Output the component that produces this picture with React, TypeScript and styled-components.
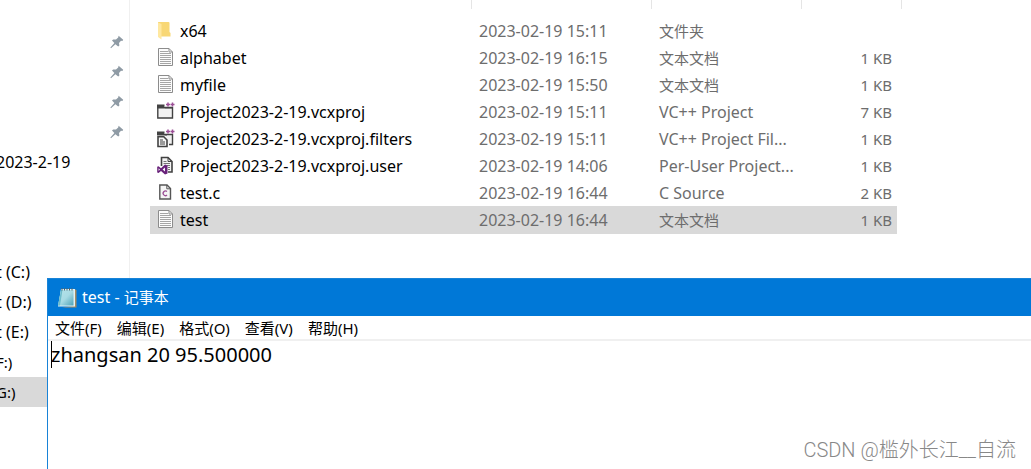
import React from "react";
import styled, { createGlobalStyle } from "styled-components";

const GlobalStyle = createGlobalStyle`
  * { box-sizing: border-box; }
  body {
    margin: 0;
    background: #fff;
    color: #000;
    font-family: "Noto Sans", "Noto Sans CJK SC", sans-serif;
    font-size: 15px;
  }
`;

const Desktop = styled.main`
  position: relative;
  display: flex;
  min-height: 100vh;
  overflow: hidden;
`;

const Sidebar = styled.nav`
  width: 130px;
  flex: none;
  padding-top: 27px;
  border-right: 1px solid #f0f0f0;
  overflow: hidden;
`;

const SideGroup = styled.div`
  margin-bottom: 80px;
`;

const SideItem = styled.a<{ $selected?: boolean }>`
  display: flex;
  align-items: center;
  height: 30px;
  padding-right: 5px;
  color: #000;
  line-height: 30px;
  text-decoration: none;
  white-space: pre;
  background: ${(p) => (p.$selected ? "#d9d9d9" : "transparent")};

  svg { margin-left: auto; }
`;

const SideLabel = styled.span<{ $large?: boolean }>`
  margin-left: -4px;
  font-size: ${(p) => (p.$large ? 16 : 15)}px;
`;

const Explorer = styled.section`
  flex: 1;
  min-width: 0;
  padding-left: 20px;
`;

const FileTable = styled.table`
  width: 752px;
  table-layout: fixed;
  border-collapse: collapse;
`;

const HeadCell = styled.th<{ $width: number; $plain?: boolean }>`
  width: ${(p) => p.$width}px;
  height: 17px;
  padding: 0;
  background: ${(p) =>
    p.$plain ? "none" : "linear-gradient(#e5e5e5, #e5e5e5) right top / 1px 9px no-repeat"};
`;

const FileRow = styled.tr<{ $selected?: boolean }>`
  height: ${(p) => (p.$selected ? 28 : 27)}px;
  td { background: ${(p) => (p.$selected ? "#d9d9d9" : "transparent")}; }
  td:last-child { background: none; }
`;

const Cell = styled.td<{ $right?: boolean; $small?: boolean }>`
  padding: 0 5px 0 7px;
  color: #6d6d6d;
  font-size: ${(p) => (p.$small ? 15 : 16)}px;
  line-height: 26px;
  white-space: nowrap;
  text-align: ${(p) => (p.$right ? "right" : "left")};
`;

const NameCell = styled(Cell)`
  color: #000;
`;

const NameBox = styled.div`
  display: flex;
  align-items: center;
  gap: 6px;
`;

const NotepadWindow = styled.section`
  position: absolute;
  left: 47px;
  top: 278px;
  right: 0;
  bottom: 0;
  display: flex;
  flex-direction: column;
  background: #fff;
  border-left: 1px solid #1883d7;
`;

const TitleBar = styled.header`
  display: flex;
  align-items: center;
  gap: 4px;
  height: 38px;
  padding-left: 9px;
  color: #fff;
  background: #0078d7;
  border-top: 1px solid #1883d7;
`;

const Title = styled.h1`
  margin: 0;
  font-size: 15px;
  font-weight: 400;
  line-height: 36px;
  padding-bottom: 2px;
`;

const FileName = styled.span`
  font-size: 16px;
`;

const MenuBar = styled.div`
  display: flex;
  gap: 15px;
  height: 25px;
  padding-left: 7px;
  border-bottom: 2px solid #f0f0f0;
`;

const MenuButton = styled.button`
  padding: 0;
  border: 0;
  background: none;
  color: #000;
  font: inherit;
  line-height: 24px;
`;

const EditorArea = styled.div`
  position: relative;
  display: flex;
  flex: 1;
`;

const Editor = styled.textarea`
  flex: 1;
  width: 100%;
  padding: 0 3px;
  border: 0;
  outline: 0;
  resize: none;
  color: #000;
  background: transparent;
  font: inherit;
  font-size: 20px;
  line-height: 28px;
`;

const Caret = styled.span`
  position: absolute;
  left: 3px;
  top: 0;
  width: 1px;
  height: 27px;
  background: #000;
`;

const Watermark = styled.p`
  position: absolute;
  right: 15px;
  bottom: 5px;
  margin: 0;
  color: #888;
  font-size: 20px;
  line-height: 28px;
  font-family: Roboto, "Noto Sans CJK SC", sans-serif;
  font-weight: 300;
`;

const PinIcon = () => (
  <svg width="14" height="14" viewBox="0 0 14 14" fill="#8f9ba5" aria-hidden="true">
    <path d="M8.6 0.8 13.2 4.8 12.4 6 11 5.8 9 8 9.4 10.6 8.2 11.6 5.4 9.2 1 13.2 0.4 12.6 4.4 8 2 5.4 3.2 4.4 6 4.6 8.2 2.4Z" />
  </svg>
);

const FolderIcon = () => (
  <svg width="17" height="20" viewBox="0 0 17 20" aria-hidden="true">
    <path d="M1 1H11.5Q12.5 1 12.5 2V11L13.5 12V15.5H1Z" fill="#f8d775" />
    <path d="M1 1.5 4.5 3V18.5L1 16Z" fill="#ffe8a0" />
  </svg>
);

const TextIcon = () => (
  <svg width="17" height="20" viewBox="0 0 17 20" aria-hidden="true">
    <path d="M1.5 0.5H12L15.5 4V17.5H1.5Z" fill="#fcfcfc" stroke="#8c8c8c" />
    <path d="M12 0.5V4H15.5" fill="none" stroke="#8c8c8c" />
    <path d="M3 3.5H11M3 5.5H14M3 7.5H14M3 9.5H14M3 11.5H14M3 13.5H14M3 15.5H14" stroke="#a5a5a5" />
  </svg>
);

const PlusPlus = () => (
  <path d="M9 2.5H13M11 0.5V4.5M13.5 2.5H17.5M15.5 0.5V4.5" stroke="#9b4f96" strokeWidth="1.5" />
);

const ProjectIcon = () => (
  <svg width="17" height="20" viewBox="0 0 17 20" overflow="visible" aria-hidden="true">
    <path d="M0.8 6V16H15.5V5.5H8" fill="#f2f2f2" stroke="#424242" strokeWidth="1.4" />
    <path d="M0 2.5H7.5V5H16V6.5H0Z" fill="#424242" />
    <PlusPlus />
  </svg>
);

const FiltersIcon = () => (
  <svg width="17" height="20" viewBox="0 0 17 20" overflow="visible" aria-hidden="true">
    <path d="M8 5.5H15.5V15.5H12" fill="#f2f2f2" stroke="#424242" strokeWidth="1.4" />
    <path d="M0 2.5H7.5V5H10V6.5H0Z" fill="#424242" />
    <path d="M1 7.8H6.8L10 11V17.5H1Z" fill="#f5f5f5" stroke="#424242" strokeWidth="1.6" />
    <path d="M3 11H6M3 13H8M3 15H8" stroke="#424242" />
    <PlusPlus />
  </svg>
);

const UserIcon = () => (
  <svg width="17" height="20" viewBox="0 0 17 20" aria-hidden="true">
    <path d="M4.5 10V1.5H11L15 5.5V16H11" fill="#f5f5f5" stroke="#424242" strokeWidth="1.6" />
    <path d="M11 1.5V5.5H15" fill="none" stroke="#424242" />
    <path d="M6.5 5.5H9.5M6.5 7.5H13M10 9.5H13M11 11.5H13M11 13.5H13" stroke="#777" />
    <path d="M8 8.5 10.5 9.5V17.5L8 18.5 4 15 1.5 17 0.2 16.4V10.8L1.5 10.2 4 12.2ZM8 11.5 5.6 13.6 8 15.6ZM1.6 12.2V15L3 13.6Z" fill="#68217a" fillRule="evenodd" />
  </svg>
);

const CIcon = () => (
  <svg width="17" height="20" viewBox="0 0 17 20" aria-hidden="true">
    <path d="M2.8 2H10L13.5 5.5V16H2.8Z" fill="#f5f5f5" stroke="#555" strokeWidth="1.4" />
    <path d="M9.8 2V5.8H13.5" fill="none" stroke="#555" />
    <path d="M10 8.6A2.3 2.3 0 1 0 10 12" fill="none" stroke="#9b4f96" strokeWidth="1.3" />
  </svg>
);

const NotepadIcon = () => (
  <svg width="21" height="22" viewBox="0 0 21 22" aria-hidden="true">
    <defs>
      <linearGradient id="page" x1="0" y1="0" x2="1" y2="1">
        <stop offset="0" stopColor="#b5e3ea" />
        <stop offset="0.5" stopColor="#a8dbe4" />
        <stop offset="1" stopColor="#4ea3b8" />
      </linearGradient>
    </defs>
    <path d="M17 2 19.5 3V20.5H5L16 19Z" fill="#a48c63" />
    <path d="M4 2H18V19.5H1Z" fill="#e2f2f5" />
    <path d="M4 3H16.5V18.5H1.2Z" fill="url(#page)" />
    <path d="M4 3H5.5L3 18.5H1Z" fill="#6dbccb" />
    <path d="M5 1V3.5M7.5 1V3.5M10 1V3.5M12.5 1V3.5M15 1V3.5" stroke="#50656d" />
  </svg>
);

type FileEntry = {
  icon: React.ReactNode;
  name: string;
  date: string;
  type: string;
  size: string;
  chinese?: boolean;
  selected?: boolean;
};

const files: FileEntry[] = [
  { icon: <FolderIcon />, name: "x64", date: "2023-02-19 15:11", type: "文件夹", size: "", chinese: true },
  { icon: <TextIcon />, name: "alphabet", date: "2023-02-19 16:15", type: "文本文档", size: "1 KB", chinese: true },
  { icon: <TextIcon />, name: "myfile", date: "2023-02-19 15:50", type: "文本文档", size: "1 KB", chinese: true },
  { icon: <ProjectIcon />, name: "Project2023-2-19.vcxproj", date: "2023-02-19 15:11", type: "VC++ Project", size: "7 KB" },
  { icon: <FiltersIcon />, name: "Project2023-2-19.vcxproj.filters", date: "2023-02-19 15:11", type: "VC++ Project Fil...", size: "1 KB" },
  { icon: <UserIcon />, name: "Project2023-2-19.vcxproj.user", date: "2023-02-19 14:06", type: "Per-User Project...", size: "1 KB" },
  { icon: <CIcon />, name: "test.c", date: "2023-02-19 16:44", type: "C Source", size: "2 KB" },
  { icon: <TextIcon />, name: "test", date: "2023-02-19 16:44", type: "文本文档", size: "1 KB", chinese: true, selected: true },
];

const drives = [
  { label: "t (C:)", large: true },
  { label: "t (D:)", large: true },
  { label: "t (E:)", large: true },
  { label: "F:)" },
  { label: "G:)", selected: true },
];

const menus = ["文件(F)", "编辑(E)", "格式(O)", "查看(V)", "帮助(H)"];

export default function App() {
  return (
    <Desktop>
      <GlobalStyle />
      <Sidebar>
        <SideGroup>
          {[0, 1, 2, 3].map((i) => (
            <SideItem key={i} href="#" aria-label="Pinned folder">
              <PinIcon />
            </SideItem>
          ))}
          <SideItem href="#">
            <SideLabel $large>2023-2-19</SideLabel>
          </SideItem>
        </SideGroup>
        {drives.map((d) => (
          <SideItem key={d.label} href="#" $selected={d.selected}>
            <SideLabel $large={d.large}>{d.label}</SideLabel>
          </SideItem>
        ))}
      </Sidebar>
      <Explorer>
        <FileTable>
          <thead>
            <tr>
              <HeadCell $width={322} aria-label="Name" />
              <HeadCell $width={180} aria-label="Date" />
              <HeadCell $width={150} aria-label="Type" />
              <HeadCell $width={95} $plain aria-label="Size" />
              <HeadCell $width={5} aria-hidden="true" />
            </tr>
          </thead>
          <tbody>
            {files.map((f) => (
              <FileRow key={f.name} $selected={f.selected}>
                <NameCell>
                  <NameBox>
                    {f.icon}
                    <span>{f.name}</span>
                  </NameBox>
                </NameCell>
                <Cell>{f.date}</Cell>
                <Cell $small={f.chinese}>{f.type}</Cell>
                <Cell $small $right>{f.size}</Cell>
                <td />
              </FileRow>
            ))}
          </tbody>
        </FileTable>
      </Explorer>
      <NotepadWindow>
        <TitleBar>
          <NotepadIcon />
          <Title>
            <FileName>test - </FileName>记事本
          </Title>
        </TitleBar>
        <MenuBar>
          {menus.map((m) => (
            <MenuButton key={m}>{m}</MenuButton>
          ))}
        </MenuBar>
        <EditorArea>
          <Editor aria-label="Text" defaultValue="zhangsan 20 95.500000" spellCheck={false} />
          <Caret />
        </EditorArea>
      </NotepadWindow>
      <Watermark>CSDN @槛外长江__自流</Watermark>
    </Desktop>
  );
}
